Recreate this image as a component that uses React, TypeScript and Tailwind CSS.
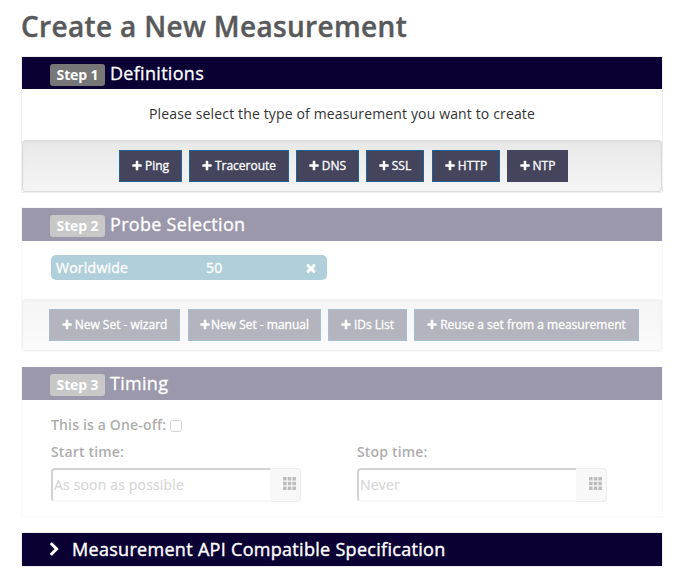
import type { ReactNode } from "react";

const PLUS =
  "M1600 736v192q0 40-28 68t-68 28h-416v416q0 40-28 68t-68 28h-192q-40 0-68-28t-28-68v-416h-416q-40 0-68-28t-28-68v-192q0-40 28-68t68-28h416v-416q0-40 28-68t68-28h192q40 0 68 28t28 68v416h416q40 0 68 28t28 68z";
const TIMES =
  "M1490 1322q0 40-28 68l-136 136q-28 28-68 28t-68-28l-294-294-294 294q-28 28-68 28t-68-28l-136-136q-28-28-28-68t28-68l294-294-294-294q-28-28-28-68t28-68l136-136q28-28 68-28t68 28l294 294 294-294q28-28 68-28t68 28l136 136q28 28 28 68t-28 68l-294 294 294 294q28 28 28 68z";
const CHEVRON =
  "M1363 877l-742 742q-19 19-45 19t-45-19l-166-166q-19-19-19-45t19-45l531-531-531-531q-19-19-19-45t19-45l166-166q19-19 45-19t45 19l742 742q19 19 19 45t-19 45z";

function Icon({ d, className }: { d: string; className: string }) {
  return (
    <svg viewBox="0 0 1792 1792" fill="currentColor" className={`shrink-0 ${className}`}>
      <path d={d} />
    </svg>
  );
}

function GridIcon() {
  return (
    <svg viewBox="0 0 13 13" className="size-[13px]" fill="#5a5a5a">
      {[0, 4.7, 9.4].map((y) =>
        [0, 4.7, 9.4].map((x) => <rect key={`${x}-${y}`} x={x} y={y} width="3.6" height="3.6" rx="0.5" />),
      )}
    </svg>
  );
}

function PlusButton({ label, className, tight = false }: { label: string; className: string; tight?: boolean }) {
  return (
    <button
      className={`flex h-8 shrink-0 items-center justify-center border bg-[#44455c] pr-px text-[12px] whitespace-nowrap text-white [-webkit-text-stroke:0.3px] ${tight ? "" : "gap-[2px]"} ${className}`}
    >
      <Icon d={PLUS} className="size-3" />
      <span>{label}</span>
    </button>
  );
}

function StepHeader({ step, title, className }: { step: string; title: string; className: string }) {
  return (
    <div className={`flex items-start bg-[#0a0033] pl-7 text-white ${className}`}>
      <span className="mt-[7px] flex h-[22px] w-[55px] items-center justify-center rounded-[3px] bg-[#777] pb-[2px] text-[14px] font-bold tracking-[-0.1px] whitespace-nowrap">
        {step}
      </span>
      <h2 className="ml-[5px] text-[18px] leading-8 tracking-[0.3px] whitespace-nowrap [-webkit-text-stroke:0.3px]">{title}</h2>
    </div>
  );
}

function Well({ children, className }: { children: ReactNode; className: string }) {
  return (
    <div
      className={`flex h-[52px] items-start rounded-[3px] border border-[#dcdcdc] bg-linear-to-b from-[#e8e8e8] to-[#f5f5f5] pt-[9px] shadow-[inset_0_1px_3px_rgba(0,0,0,0.05)] ${className}`}
    >
      {children}
    </div>
  );
}

function TimeField({ label, placeholder }: { label: string; placeholder: string }) {
  return (
    <div className="w-[250px]">
      <div className="h-[27px] text-[14px] leading-[21px] font-semibold tracking-[0.16px] whitespace-nowrap text-[#333]">
        {label}
      </div>
      <div className="flex h-[34px]">
        <div className="flex w-[219px] items-center rounded-l-[4px] border-t-2 border-b-2 border-l-2 border-t-[#949494] border-b-[#eee] border-l-[#949494] pb-px pl-px text-[14px] tracking-[0.17px] text-[#999] [-webkit-text-stroke:0.2px]">
          {placeholder}
        </div>
        <div className="flex w-[31px] items-start rounded-r-[4px] border-t border-r border-b border-[#d5d5d5] bg-[#eee] pt-2 pl-[13px]">
          <GridIcon />
        </div>
      </div>
    </div>
  );
}

export default function App() {
  return (
    <main className="h-[588px] w-[689px] bg-white pt-[8px] pl-[21px] font-['Open_Sans',sans-serif] text-[#333]">
      <h1 className="h-12 text-[28px] leading-[37px] font-semibold tracking-[0.34px] whitespace-nowrap text-[#58595b] [-webkit-text-stroke:0.4px]">
        Create a New Measurement
      </h1>

      <section className="h-[137px] w-[642px] border border-[#eee]">
        <StepHeader step="Step 1" title="Definitions" className="h-8" />
        <p className="h-[51px] text-center text-[14px] leading-[50px] tracking-[0.145px]">
          Please select the type of measurement you want to create
        </p>
        <Well className="pl-24">
          <PlusButton label="Ping" className="w-[63px] border-[#1f6296]" />
          <PlusButton label="Traceroute" className="ml-[7px] w-[100px] border-[#1f6296]" />
          <PlusButton label="DNS" className="ml-[7px] w-[63px] border-[#1f6296]" />
          <PlusButton label="SSL" className="ml-[7px] w-[58px] border-[#1f6296]" />
          <PlusButton label="HTTP" className="ml-2 w-[68px] border-[#1f6296]" />
          <PlusButton label="NTP" className="ml-[7px] w-[61px] border-[#44455c]" />
        </Well>
      </section>

      <section className="mt-[14px] h-[145px] w-[642px] border border-[#eee] opacity-40">
        <StepHeader step="Step 2" title="Probe Selection" className="h-[33px]" />
        <div className="h-[58px] pt-[14px] pl-[29px]">
          <div className="flex h-[25px] w-[276px] items-center rounded-[5px] bg-[#3e89a5] pl-[5px] text-[14px] tracking-[0.25px] text-white [-webkit-text-stroke:0.3px]">
            <span className="w-[150px]">Worldwide</span>
            <span className="w-[98px]">50</span>
            <Icon d={TIMES} className="size-[14px]" />
          </div>
        </div>
        <Well className="pl-[26px]">
          <PlusButton label="New Set - wizard" className="w-[131px] border-[#1f6296]" />
          <PlusButton label="New Set - manual" className="ml-2 w-[133px] border-[#1f6296]" tight />
          <PlusButton label="IDs List" className="ml-[7px] w-[79px] border-[#1f6296]" />
          <PlusButton label="Reuse a set from a measurement" className="ml-[7px] w-[225px] border-[#1f6296]" />
        </Well>
      </section>

      <section className="mt-[14px] h-[151px] w-[642px] border border-[#eee] opacity-40">
        <StepHeader step="Step 3" title="Timing" className="h-[33px]" />
        <div className="pt-[15px] pl-[29px]">
          <label className="flex h-[26px] items-start text-[14px] leading-[20px] font-semibold tracking-[0.16px] whitespace-nowrap">
            <span className="w-[115px]">This is a One-off:</span>
            <span className="mt-[5px] ml-1 size-3 rounded-[3px] border border-[#999] bg-white" />
          </label>
          <div className="flex gap-[56px]">
            <TimeField label="Start time:" placeholder="As soon as possible" />
            <TimeField label="Stop time:" placeholder="Never" />
          </div>
        </div>
      </section>

      <section className="mt-[15px] h-[35px] w-[642px] border border-[#eee]">
        <div className="flex h-[33px] items-start bg-[#0a0033] pl-[25px] text-white">
          <Icon d={CHEVRON} className="mt-[9px] size-[15px]" />
          <h2 className="ml-[10px] text-[18px] leading-8 tracking-[0.3px] whitespace-nowrap [-webkit-text-stroke:0.4px]">
            Measurement API Compatible Specification
          </h2>
        </div>
      </section>
    </main>
  );
}
